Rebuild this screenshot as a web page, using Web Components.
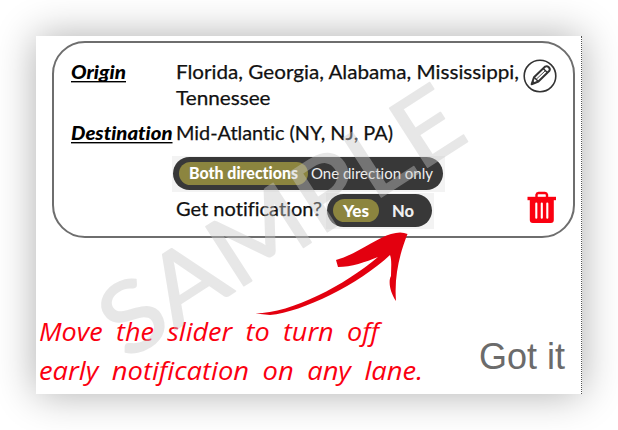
<!DOCTYPE html>
<html lang="en"><head><meta charset="utf-8"><title>Lane notification</title>
<style>html,body{margin:0;background:#fff}body{width:618px;height:430px;overflow:hidden;font-family:Lato,"Noto Sans",sans-serif}</style></head>
<body><lane-tip></lane-tip>
<script>
// One line of text fitted to a given width.
customElements.define('fit-text', class extends HTMLElement {
  connectedCallback() {
    const a = (n, d) => this.getAttribute(n) || d;
    const w = +a('w', 100), h = +a('h', 26), b = a('base', 19);
    this.attachShadow({mode:'open'}).innerHTML = `<style>
      :host{display:block;width:${w}px;height:${h}px;flex:none}
      svg{display:block;overflow:visible}
      text{font-family:${a('font','Lato')},"Noto Sans",sans-serif;font-size:${a('size',18)}px;font-weight:${a('weight',400)};font-style:${a('slant','normal')};fill:currentColor;stroke:currentColor;stroke-width:${a('stroke','0')};word-spacing:${a('gap',0)}px;font-variant-ligatures:none}
    </style><svg width="${w}" height="${h}"><text x="0" y="${b}" textLength="${w}" lengthAdjust="spacingAndGlyphs"></text>${this.hasAttribute('line') ? `<rect x="0" y="${+b + 2}" width="${w}" height="1.4" fill="currentColor"/>` : ''}</svg>`;
    this.shadowRoot.querySelector('text').textContent = a('label','');
  }
});
customElements.define('pill-switch', class extends HTMLElement {
  connectedCallback() {
    this.attachShadow({mode:'open'}).innerHTML = `<style>
      :host{display:block;background:#f3f3f3;padding:1px 2px 2px 1px;width:max-content;flex:none}
      .track{display:flex;align-items:center;box-sizing:border-box;height:33px;padding:0 6px;border-radius:17px;background:#383838;color:#fff}
      .on{display:flex;align-items:center;box-sizing:border-box;height:23px;border-radius:12px;background:#8c853f;padding:0 10px}
      .off{color:#eee;display:flex;padding:0 var(--off-r,3px) 0 var(--off-l,4px)}
    </style><div class="track"><div class="on"><slot name="on"></slot></div><div class="off"><slot name="off"></slot></div></div>`;
  }
});
customElements.define('edit-icon', class extends HTMLElement {
  connectedCallback() {
    this.attachShadow({mode:'open'}).innerHTML = `<style>:host{display:block}svg{display:block}</style>
    <svg width="34" height="34" viewBox="0 0 34 34" fill="none" stroke="#333">
      <circle cx="17" cy="17" r="15.8" stroke-width="1.6"/>
      <path d="M8.6 25.2L11 18.2L22.2 7.6Q24 6.6 25.8 8.3Q27.5 10 26.4 11.8L15.4 22.5Z" stroke-width="2" stroke-linejoin="round"/>
      <path d="M20.2 9.5L24.6 13.8M11 18.2L15.4 22.5" stroke-width="1.4"/>
      <path d="M13.2 20.3L22 12" stroke-width=".9"/>
      <path d="M8 26L9.7 21.5L12.4 24Z" fill="#333" stroke="none"/>
    </svg>`;
  }
});
customElements.define('trash-icon', class extends HTMLElement {
  connectedCallback() {
    this.attachShadow({mode:'open'}).innerHTML = `<style>:host{display:block}svg{display:block}</style>
    <svg width="30" height="33" viewBox="0 0 30 33">
      <path d="M9.5 6V3.6Q9.8 2 11.5 2H18Q19.7 2 20 3.6V6" fill="none" stroke="#fb0010" stroke-width="2.4"/>
      <path d="M.5 5.8H29V9.2H.5Z" fill="#fb0010"/>
      <path d="M2.8 8H26.8V29Q26.8 32 23.8 32H5.8Q2.8 32 2.8 29Z" fill="#fb0010"/>
      <path d="M9.3 12.5V26.8M14.8 12.5V26.8M20.3 12.5V26.8" stroke="#fff" stroke-width="2.1" stroke-linecap="round"/>
    </svg>`;
  }
});
customElements.define('lane-card', class extends HTMLElement {
  connectedCallback() {
    this.attachShadow({mode:'open'}).innerHTML = `<style>
      :host{display:flex;box-sizing:border-box;width:523px;height:196.5px;border:2px solid #6e6e6e;border-radius:33px;color:#111;padding:16.5px 16px 0 16.5px}
      .labels{width:105.500px;display:flex;flex-direction:column;gap:35.5px;color:#000}
      .main{width:346px;display:flex;flex-direction:column;align-items:flex-start}
      .dest{margin-top:9px}.one{--off-l:3px;--off-r:4px;margin:9px 0 0 -4px}
      .row{display:flex;gap:4px;margin-top:1px}.row>fit-text{margin-top:4px}
      .yn{--off-l:13px;--off-r:12px}
      .tools{display:flex;flex-direction:column;justify-content:space-between;align-items:center;flex:1;padding:0 0 12px}
      edit-icon{margin:-.5px 0 0 0}trash-icon{margin-left:5px}
    </style>
    <div class="labels"><fit-text label="Origin" w="55" weight="900" slant="italic" size="19" line></fit-text><fit-text label="Destination" w="101.5" weight="900" slant="italic" size="19" line></fit-text></div>
    <div class="main">
      <fit-text label="Florida, Georgia, Alabama, Mississippi," w="343" size="19.5" stroke=".25"></fit-text>
      <fit-text label="Tennessee" w="94.5" size="19.5" stroke=".25"></fit-text>
      <fit-text class="dest" label="Mid-Atlantic (NY, NJ, PA)" w="217" size="19.5" stroke=".25"></fit-text>
      <pill-switch class="one"><fit-text slot="on" label="Both directions" w="109" size="16" weight="900" h="21" base="16"></fit-text><fit-text slot="off" label="One direction only" w="122" size="16" h="21" base="15.5"></fit-text></pill-switch>
      <div class="row"><fit-text label="Get notification?" w="146" size="19.5" stroke=".25"></fit-text>
      <pill-switch class="yn"><fit-text slot="on" label="Yes" w="26" size="17.5" weight="900" h="21" base="17"></fit-text><fit-text slot="off" label="No" w="22" size="17.5" weight="900" h="21" base="17"></fit-text></pill-switch></div>
    </div>
    <div class="tools"><edit-icon></edit-icon><trash-icon></trash-icon></div>`;
  }
});
customElements.define('lane-tip', class extends HTMLElement {
  connectedCallback() {
    this.attachShadow({mode:'open'}).innerHTML = `<style>
      :host{display:block;position:relative;box-sizing:border-box;width:618px;height:430px;padding:36px}
      .panel{box-sizing:border-box;width:546px;height:358px;background:#fff;box-shadow:0 0 38px rgba(0,0,0,.32);border-right:1px dotted #555;padding:5px 0 0 16px}
      .foot{display:flex;margin:79px 0 0 -13px;color:#fb0010}
      .msg{width:440px;display:flex;flex-direction:column}
      .got{color:#6b6b6b;margin-top:17px}
      .over{position:absolute;left:0;top:0;pointer-events:none}
      .mark{font:98px Lato,sans-serif;fill:#c7c7c7;stroke:#c7c7c7;stroke-width:1.5;stroke-linejoin:round}
    </style>
    <div class="panel"><lane-card></lane-card>
      <div class="foot"><div class="msg">
        <fit-text label="Move the slider to turn off" w="340" size="25.5" slant="italic" font="'Open Sans'" h="39.5" base="23.5" gap="6"></fit-text>
        <fit-text label="early notification on any lane." w="384" size="25.5" slant="italic" font="'Open Sans'" h="39.5" base="23.5" gap="6"></fit-text>
      </div><fit-text class="got" label="Got it" w="86" size="37" font="'Liberation Sans'" h="40" base="34.5"></fit-text></div>
    </div>
    <svg class="over" width="618" height="430">
      <g opacity=".42"><text class="mark" transform="translate(127,361) rotate(-32.8)" textLength="410" lengthAdjust="spacingAndGlyphs">SAMPLE</text></g>
      <path fill="#e3000f" d="M255.5 313.5C292 313 345 285 378 257C366 262 351 267 338 267L336 260C355 255 377 238 391 234Q401 231 407.500 234C400 253 394 275 396 301C390 292 388 281 391 276C391 268 392 260 390 255C359 284 303 312 270 315Z"/>
    </svg>`;
  }
});
</script></body></html>
